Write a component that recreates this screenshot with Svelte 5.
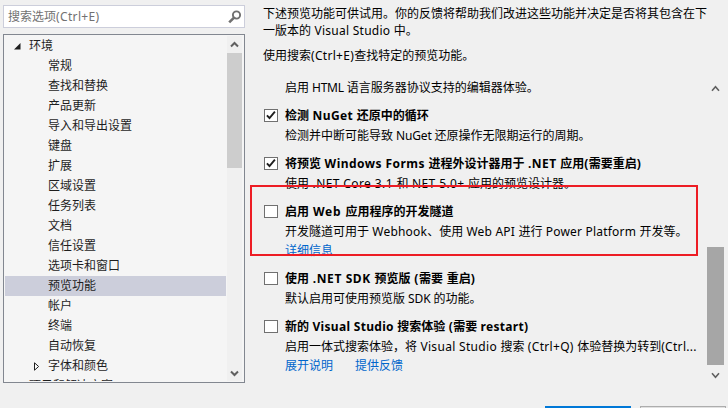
<script>
  const tree = [
    '常规', '查找和替换', '产品更新', '导入和导出设置', '键盘', '扩展',
    '区域设置', '任务列表', '文档', '信任设置', '选项卡和窗口', '预览功能',
    '帐户', '终端', '自动恢复'
  ];
  const features = [
    { title: '检测 NuGet 还原中的循环', gap: 0.4, text: '检测并中断可能导致 NuGet 还原操作无限期运行的周期。', textGap: -0.15, on: true },
    { title: '将预览 Windows Forms 进程外设计器用于 .NET 应用(需要重启)', gap: 0.45, text: '使用 .NET Core 3.1 和 NET 5.0+ 应用的预览设计器。', textGap: 0.4, on: true },
    { title: '启用 Web 应用程序的开发隧道', gap: 0.8, text: '开发隧道可用于 Webhook、使用 Web API 进行 Power Platform 开发等。', textGap: 0.2, on: false, links: ['详细信息'] },
    { title: '使用 .NET SDK 预览版 (需要 重启)', gap: 0.6, text: '默认启用可使用预览版 SDK 的功能。', textGap: -0.1, on: false },
    { title: '新的 Visual Studio 搜索体验 (需要 restart)', gap: 0.31, text: '启用一体式搜索体验，将 Visual Studio 搜索 (Ctrl+Q) 体验替换为转到(Ctrl...', textGap: 0.31, on: false, links: ['展开说明', '提供反馈'] }
  ];
  // Split into alternating CJK and Latin runs so that only Latin gets tracking.
  const runs = (s) => s.split(/([\x20-\x7e]+)/).filter(Boolean);
  const latin = (s) => s.charCodeAt(0) < 128;
</script>

{#snippet mixed(text, gap)}{#each runs(text) as r}{#if latin(r)}<span style:letter-spacing="{gap}px">{r}</span>{:else}{r}{/if}{/each}{/snippet}

<div class="dialog">
  <aside>
    <div class="search">
      <span>{@render mixed('搜索选项(Ctrl+E)', 0.35)}</span>
      <svg width="14" height="14" viewBox="0 0 14 14" fill="none" stroke="#717171">
        <circle cx="8.5" cy="5" r="3.6" stroke-width="1.9" />
        <path d="M5.8 7.8L1.2 12.4" stroke-width="2.6" />
      </svg>
    </div>
    <div class="tree">
      <ul>
        <li class="root">
          <svg width="7" height="7" viewBox="0 0 7 7"><path d="M6.5 0V6.5H0Z" fill="#1e1e1e" /></svg><span>环境</span>
        </li>
        {#each tree as item}
          <li class:selected={item === '预览功能'}><span>{item}</span></li>
        {/each}
        <li class="branch">
          <svg width="6" height="9" viewBox="0 0 6 9"><path d="M.5.8V8.2L4.6 4.5Z" fill="#fff" stroke="#1e1e1e" /></svg><span>字体和颜色</span>
        </li>
        <li class="root last"><span>项目和解决方案</span></li>
      </ul>
      <div class="bar">
        <svg width="9" height="7" viewBox="0 0 9 7"><path d="M1 5.5L4.5 2L8 5.5" fill="none" stroke="#606060" stroke-width="2" /></svg>
        <div class="thumb"></div>
        <svg class="down" width="9" height="7" viewBox="0 0 9 7"><path d="M1 1.5L4.5 5L8 1.5" fill="none" stroke="#606060" stroke-width="2" /></svg>
      </div>
    </div>
  </aside>

  <main>
    <p class="intro">下述预览功能可供试用。你的反馈将帮助我们改进这些功能并决定是否将其包含在下<br />{@render mixed('一版本的 Visual Studio 中。', 0.27)}</p>
    <p class="hint">{@render mixed('使用搜索(Ctrl+E)查找特定的预览功能。', 0.3)}</p>
    <div class="scroller">
      <div class="list">
        <p class="desc">{@render mixed('启用 HTML 语言服务器协议支持的编辑器体验。', -0.2)}</p>
        {#each features as f}
          <section class:linked={f.links}>
            <div class="title">
              <span class="box">
                {#if f.on}
                  <svg width="12" height="11" viewBox="0 0 12 11"><path d="M1.9 5.4L4.5 8L9.9 1.7" fill="none" stroke="#1e1e1e" stroke-width="1.9" /></svg>
                {/if}
              </span>
              <b>{@render mixed(f.title, f.gap)}</b>
            </div>
            <p class="desc">{@render mixed(f.text, f.textGap)}</p>
            {#if f.links}
              <div class="links">{#each f.links as l}<span>{l}</span>{/each}</div>
            {/if}
          </section>
        {/each}
      </div>
      <div class="bar2">
        <svg width="9" height="7" viewBox="0 0 9 7"><path d="M1 5.7L4.5 1.8L8 5.7" fill="none" stroke="#606060" stroke-width="1.6" /></svg>
        <div class="thumb2"></div>
        <svg width="9" height="7" viewBox="0 0 9 7"><path d="M1 1.3L4.5 5.2L8 1.3" fill="none" stroke="#606060" stroke-width="1.6" /></svg>
      </div>
    </div>
    <footer><div class="ok"></div><div class="cancel"></div></footer>
  </main>
  <div class="highlight"></div>
</div>

<style>
  .dialog {
    position: relative;
    display: flex;
    box-sizing: border-box;
    width: 728px;
    height: 408px;
    overflow: hidden;
    background: #f0f0f0;
    color: #000;
    font: 12px/17px 'Noto Sans', 'Noto Sans CJK SC', sans-serif;
    white-space: nowrap;
  }
  svg { display: block; flex: none; }
  p, ul { margin: 0; padding: 0; }
  aside { width: 242px; padding: 5px 0 0 3px; flex: none; }
  .search {
    box-sizing: border-box;
    height: 23px;
    display: flex;
    align-items: center;
    justify-content: space-between;
    padding: 0 2px 0 4px;
    border: 1px solid #cccedb;
    background: #fff;
    color: #717171;
  }
  .tree {
    box-sizing: border-box;
    height: 349px;
    margin-top: 6px;
    display: flex;
    overflow: hidden;
    border: 1px solid #828790;
    background: #f5f5f5;
    padding: 1px;
  }
  ul { list-style: none; width: 221px; height: 345px; overflow: hidden; color: #1e1e1e; }
  li { height: 20px; line-height: 18px; padding-left: 43px; display: flex; align-items: center; }
  li span { padding-bottom: 1px; line-height: 17px; }
  .root { padding-left: 9px; gap: 8px; }
  .root.last { padding-left: 24px; }
  .branch { padding-left: 29px; gap: 8px; }
  .selected { background: #cccedb; }
  .bar {
    margin-left: 1px;
    width: 15px;
    display: flex;
    flex-direction: column;
    align-items: center;
    background: #f0f0f0;
    padding: 5px 0 4px;
    box-sizing: border-box;
  }
  .thumb { width: 15px; height: 115px; margin-top: 5px; background: #cdcdcd; }
  .down { margin-top: auto; }
  main { width: 483px; display: flex; flex-direction: column; }
  .intro { padding: 5px 0 0 18px; }
  .hint { padding: 8px 0 0 18px; }
  .scroller { display: flex; height: 303px; margin-top: 14px; }
  .list { width: 461px; padding-left: 19px; box-sizing: border-box; overflow: hidden; }
  .desc { height: 20px; line-height: 20px; padding-left: 21px; }
  section { height: 48px; padding-top: 8px; box-sizing: border-box; }
  section.linked { height: 67px; }
  .title { display: flex; height: 20px; align-items: center; gap: 7px; }
  .title b { padding-bottom: 2px; }
  .box { box-sizing: border-box; width: 14px; height: 13px; margin-bottom: 1px; border: 1px solid #707070; background: #fff; flex: none; }
  .links { display: flex; gap: 22px; padding-left: 21px; line-height: 18px; color: #0066cc; }
  .bar2 { display: flex; flex-direction: column; align-items: center; width: 17px; margin-left: 1px; padding-top: 7px; box-sizing: border-box; }
  .thumb2 { width: 17px; height: 118px; margin: 155px 0 7px; background: #a6a6a6; }
  footer { display: flex; gap: 9px; padding-left: 300px; margin-top: auto; }
  .ok { width: 86px; height: 2px; background: #0078d7; }
  .cancel { box-sizing: border-box; width: 86px; height: 2px; border: 1px solid #adadad; border-bottom: 0; background: #e1e1e1; }
  .highlight { position: absolute; left: 250px; top: 185px; width: 448px; height: 71px; box-sizing: border-box; border: 2px solid #ed1c24; }
</style>
